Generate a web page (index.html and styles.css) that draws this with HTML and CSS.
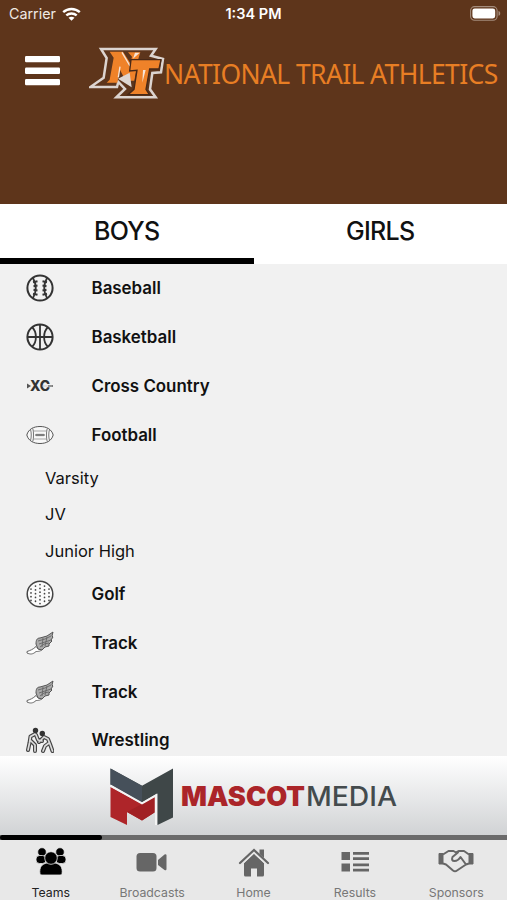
FILE: index.html
```html
<!DOCTYPE html>
<html lang="en">
<head>
<meta charset="utf-8">
<title>National Trail Athletics</title>
<link rel="stylesheet" href="styles.css">
</head>
<body>
<svg class="defs" width="0" height="0">
  <symbol id="shoe" viewBox="0 0 28 24">
    <path d="M1 20.500c3-1 6-2 9-5l3 3 4-1c-2 3-5 3-7 3-3 3-6 3-9 1.500z" fill="#fff" stroke="#666" stroke-width="1"/>
    <path d="M10 13c0-4 1-6 4-6l7-2 6-4-1 4 1 1-2 3 1 1-3 3 0 2-4 1-3 3-4-1z" fill="#aaa" stroke="#555" stroke-width="1"/>
    <path d="M12 10l7-2 6-3M13 13l6-2 6-2M14 16l4-3 5-1M17 7l-1 9M21 6l-2 9" fill="none" stroke="#666" stroke-width=".9"/>
  </symbol>
</svg>
<div class="app">
  <header class="header">
    <div class="status">
      <div class="carrier">Carrier
        <svg width="19" height="14" viewBox="0 0 19 14" fill="none" stroke="#fff" stroke-width="2.4"><path d="M1.2 5.2c4.7-4.3 11.9-4.3 16.6 0M4.3 8.4c3-2.6 7.4-2.6 10.4 0"/><path d="M9.5 13.7L6.5 10.8c1.7-1.4 4.3-1.4 6 0z" fill="#fff" stroke="none"/></svg>
      </div>
      <div class="clock">1:34 PM</div>
      <svg class="battery" width="31" height="15" viewBox="0 0 31 15"><rect x=".6" y=".6" width="26.5" height="13.6" rx="4" fill="none" stroke="#a48c7c" stroke-width="1.1"/><rect x="2.4" y="2.4" width="22.8" height="10" rx="2.3" fill="#fff"/><path d="M28.5 5c2.3.6 2.3 4.2 0 4.8z" fill="#a48c7c"/></svg>
    </div>
    <div class="brand">
      <svg class="menu" width="35" height="30" viewBox="0 0 35 30" fill="#fff"><rect width="35" height="6.3" rx="1.2"/><rect y="11.6" width="35" height="6.3" rx="1.2"/><rect y="23" width="35" height="6.3" rx="1.2"/></svg>
      <svg class="logo" width="76" height="54" viewBox="24 18 228 162">
        <path d="M60 27H224L210 47 246 57 240 97 214 99 207 148 224 172H106L132 147 112 126 108 141H28L68 113 77 54Z" fill="#5d351c" stroke="#dcd4d0" stroke-width="7.500"/>
        <path d="M86 35H126L148 70 153 50 141 37H178L171 60 160 122 134 122 116 88 109 128H77L86 119 98 53Z" fill="#ef8229"/>
        <path d="M123 37L147 78M117 80L112 112" fill="none" stroke="#f7e5d8" stroke-width="4"/>
        <path d="M111 116L146 98 152 142Z" fill="#ddd6d2"/>
        <path d="M150 59H240L234 87 206 87 195 148 205 164H141L159 148 168 91 146 93Z" fill="#ef8229" stroke="#472817" stroke-width="4"/>
        <path d="M176 38L156 56 162 38ZM194 90L184 128 186 90Z" fill="#f7e5d8"/>
      </svg>
      <h1 class="title">NATIONAL TRAIL ATHLETICS</h1>
    </div>
  </header>
  <div class="tabs"><div class="tab active">BOYS</div><div class="tab">GIRLS</div></div>
  <main class="list">
    <div class="row"><svg class="icon" viewBox="0 0 28 28" fill="none" stroke="#333"><circle cx="14" cy="14" r="12.6" stroke-width="2"/><path d="M7 4c3.600 6.500 3.600 13.500 0 20M21 4c-3.600 6.500-3.600 13.500 0 20" stroke-width="1.800"/><path d="M7 8.300l4.500-1M7.500 12.300l4-.7M7.500 15.700l4 .7M7 19.700l4.500 1M21 8.300l-4.500-1M20.500 12.300l-4-.7M20.500 15.700l-4 .7M21 19.700l-4.500 1" stroke-width="2"/></svg><span>Baseball</span></div>
    <div class="row"><svg class="icon" viewBox="0 0 28 28" fill="none" stroke="#333" stroke-width="1.8"><circle cx="14" cy="14" r="12.600" stroke-width="2"/><path d="M14 1v26M1 14h26M6 4c5.200 5 5.200 15 0 20M22 4c-5.200 5-5.200 15 0 20"/></svg><span>Basketball</span></div>
    <div class="row"><svg class="icon" viewBox="0 0 28 28"><path d="M1 11.500l4 2.500-4 2.500zM22 13.200h5v1.600h-5z" fill="#555"/><text class="xc" x="4" y="19.300" textLength="20" lengthAdjust="spacingAndGlyphs">XC</text><path d="M16 14h10" stroke="#bbb" stroke-width=".7"/></svg><span>Cross Country</span></div>
    <div class="row"><svg class="icon" viewBox="0 0 28 28" fill="none" stroke="#555"><path d="M.8 14C2.500 7.800 8 5.500 14 5.500S25.500 7.800 27.200 14C25.500 20.200 20 22.500 14 22.500S2.500 20.200.8 14z" fill="#f8f8f8"/><path d="M4.500 8.500c1 3 1 8 0 11M6.800 7.500c1 4 1 9 0 13M23.500 8.500c-1 3-1 8 0 11M21.200 7.500c-1 4-1 9 0 13" stroke-width=".8"/><path d="M7.500 10h13M7.500 18h13" stroke-width=".5"/><path d="M9 14h10M11 12.800v2.400M13 12.800v2.400M15 12.800v2.400M17 12.800v2.400" stroke-width="1"/></svg><span>Football</span></div>
    <div class="sub">Varsity</div>
    <div class="sub">JV</div>
    <div class="sub">Junior High</div>
    <div class="row"><svg class="icon" viewBox="0 0 28 28" fill="none" stroke="#444"><circle cx="14" cy="14" r="12.800" fill="#fbfbfb" stroke-width="1.500"/><path d="M14 4.500v20M9.500 6v18M18.500 6v18M5 9v12M23 9v12" stroke-width="1.700" stroke-linecap="round" stroke-dasharray=".1 3.700"/></svg><span>Golf</span></div>
    <div class="row"><svg class="icon"><use href="#shoe"/></svg><span>Track</span></div>
    <div class="row"><svg class="icon"><use href="#shoe"/></svg><span>Track</span></div>
    <div class="row"><svg class="icon" viewBox="0 0 28 28" fill="none" stroke-linecap="round" stroke-linejoin="round"><path id="wrestlers" d="M9 8L4.500 10.500 3.500 17 2 24M5 15l4 4v6M10 9l2 5 4 1M18 11l4 2 2 5 2.500 7M23 17l-4 3-2 5M17 12l-4 4" stroke="#444" stroke-width="4"/><path d="M9 8L4.500 10.500 3.500 17 2 24M5 15l4 4v6M10 9l2 5 4 1M18 11l4 2 2 5 2.500 7M23 17l-4 3-2 5M17 12l-4 4" stroke="#ddd" stroke-width="1.700"/><circle cx="9.500" cy="4.500" r="2.700" fill="#333"/><circle cx="16.300" cy="7.500" r="2.700" fill="#333"/></svg><span>Wrestling</span></div>
  </main>
  <div class="sponsor">
    <svg class="mark" width="64" height="58" viewBox="0 0 64 58"><path d="M.5.500L32 17.800 63 .500V49.500L47.500 57V25.500L32 34.500.5 16.500z" fill="#3f4748"/><path d="M.5.500L32 17.800V34.500L.5 16.500z" fill="#46505a"/><path d="M.5 19L32 36 44.500 29V44.500L32 52.500 17 44V57L.5 49z" fill="#ae2529"/><path d="M17 44L32 36 44.500 29V44.500L32 52.500z" fill="#a12024"/><path d="M.5 17.700L32 35.300 46 27.300V57" fill="none" stroke="#f4f4f4" stroke-width="2"/></svg>
    <svg class="wordmark" width="218" height="36" viewBox="0 0 218 36"><text class="mascot" x="0" y="27" textLength="124" lengthAdjust="spacingAndGlyphs">MASCOT</text><text class="media" x="125" y="27" textLength="91" lengthAdjust="spacingAndGlyphs">MEDIA</text></svg>
  </div>
  <div class="scroll"><div class="thumb"></div></div>
  <nav class="nav">
    <div class="item on"><svg width="36" height="30" viewBox="0 0 36 30" fill="#000" stroke="#e8e8e8" stroke-width=".8"><circle cx="9" cy="5" r="4.300"/><circle cx="27" cy="5" r="4.300"/><rect x="3" y="8.500" width="10" height="8" rx="3.500"/><rect x="23" y="8.500" width="10" height="8" rx="3.500"/><path d="M7 27c-1-7 2-10 7-11h8c5 1 8 4 7 11q0 1-2 1H9q-2 0-2-1z"/><circle cx="18" cy="11" r="6.300"/></svg><span>Teams</span></div>
    <div class="item"><svg width="36" height="30" viewBox="0 0 36 30" fill="#666"><rect x="2.500" y="6" width="20" height="18.500" rx="3.500"/><path d="M24 13l6.500-5.500q2-1 2 1V22q0 2-2 1L24 18z"/></svg><span>Broadcasts</span></div>
    <div class="item"><svg width="36" height="30" viewBox="0 0 36 30" fill="#666"><path d="M18 6.500L28 16V28q0 1.500-1.500 1.500H21V21.500h-6v8H9.500Q8 29.500 8 28V16z"/><path d="M4 16.500L18 3.500 32 16.500" fill="none" stroke="#e8e8e8" stroke-width="5"/><path d="M4 16L18 3 32 16" fill="none" stroke="#666" stroke-width="2.200" stroke-linecap="round"/><path d="M23.500 2.500H28V11L23.500 7z"/></svg><span>Home</span></div>
    <div class="item"><svg width="36" height="30" viewBox="0 0 36 30" fill="#666"><path d="M4.500 5h8.500v8H4.500zM4.500 16.500h8.500v8H4.500zM16 5h16v2.700H16zM16 10.300h16V13H16zM16 16.500h16v2.700H16zM16 21.800h16v2.700H16z"/></svg><span>Results</span></div>
    <div class="item"><svg width="36" height="30" viewBox="0 0 36 30" fill="none" stroke="#666" stroke-width="2" stroke-linejoin="round"><path d="M1 6.500h4v10.500H1zM31 6.500H35v10.500h-4z" fill="#666" stroke-width="1"/><path d="M5 7.500L10.500 4h5l2.500 1.500 3-1.500h5l5 3.500M5 16.500l3 1 7 6q2 1.500 4 0l9-6 3-1M20.500 5l-6 5q-1.500 4 2 4t6-4l5.500 7.500"/></svg><span>Sponsors</span></div>
  </nav>
</div>
</body>
</html>
```

FILE: styles.css
```css
* { box-sizing: border-box; }
body { margin: 0; font-family: Inter, "Liberation Sans", sans-serif; color: #111; }
.defs { display: block; }
.app { width: 507px; height: 900px; display: flex; flex-direction: column; overflow: hidden; background: #f1f1f1; }
.header { height: 203.5px; flex: none; background: #5e351b; color: #fff; }
.status { height: 27px; display: grid; grid-template-columns: 1fr auto 1fr; align-items: center; padding: 0 6px 0 9px; }
.carrier { display: flex; align-items: center; gap: 6px; font-size: 14.3px; color: #f0e9e4; }
.clock { font-size: 14.5px; font-weight: 600; padding-right: 3px; }
.battery { justify-self: end; }
.brand { display: flex; align-items: flex-start; padding: 19px 0 0 25px; }
.menu { margin-top: 10px; flex: none; }
.logo { margin-left: 29px; flex: none; }
.title { margin: 9px 0 0 -1px; font: 400 26.5px/38px "Noto Sans", sans-serif; color: #e87e24; white-space: nowrap; letter-spacing: -0.62px; }
.tabs { height: 60.5px; flex: none; display: flex; background: #fff; }
.tab { flex: 1; text-align: center; font-size: 25px; font-weight: 500; line-height: 54px; letter-spacing: -0.7px; border-bottom: 6px solid transparent; }
.tab.active { border-color: #000; }
.list { height: 492px; flex: none; overflow: hidden; }
.row { height: 48.9px; display: flex; align-items: center; padding-left: 26px; font-size: 16.9px; font-weight: 600; }
.icon { width: 28px; height: 28px; margin-right: 37.5px; flex: none; }
.xc { font: 800 14px Inter, sans-serif; fill: #333; }
.sub { height: 36.6px; line-height: 37px; padding-left: 45px; font-size: 16.5px; }
.sponsor { height: 79px; flex: none; display: flex; justify-content: center; padding: 12px 0 0 1px; gap: 7px; background: linear-gradient(#fff, #d1d3d5); }
.wordmark { margin-top: 11px; }
.mascot { font: 900 27px Inter, sans-serif; fill: #ab2529; }
.media { font: 500 27px Inter, sans-serif; fill: #444b4d; }
.scroll { height: 5px; flex: none; background: #6b6b6b; }
.thumb { width: 102px; height: 5px; background: #000; border-radius: 3px; }
.nav { flex: 1; display: flex; background: #e8e8e8; color: #777; }
.item { flex: 1; display: flex; flex-direction: column; align-items: center; padding-top: 7px; font-size: 12.3px; }
.item span { margin-top: 8px; line-height: 16px; }
.on { color: #222; }
```
